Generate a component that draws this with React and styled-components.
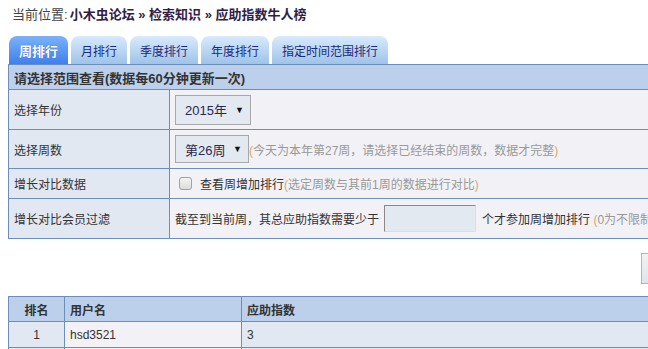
import React from "react";
import styled, { createGlobalStyle, css } from "styled-components";

const Global = createGlobalStyle`
  html, body { margin: 0; padding: 0; overflow: hidden; background: #fff; }
  body { font-family: "Liberation Sans", "Noto Sans CJK SC", sans-serif; font-size: 12px; color: #333; }
`;

const Page = styled.div`
  width: 1000px;
  padding: 0 0 0 8px;
`;

const Crumb = styled.div`
  height: 26px;
  display: flex;
  align-items: center;
  padding-left: 4px;
  font-size: 13px;
  color: #444;
`;

const CrumbStrong = styled.b`
  color: #2f1d45;
  margin-left: 2px;
`;

const Tabs = styled.div`
  display: flex;
  gap: 3px;
  margin-top: 10px;
  padding-left: 1px;
  height: 28px;
  align-items: stretch;
`;

const Tab = styled.div`
  padding: 0 10px;
  display: flex;
  align-items: center;
  justify-content: center;
  border-radius: 8px 8px 0 0;
  font-size: 12px;
  color: #1b2a7a;
  background: linear-gradient(#d8eafd, #9fc3e8);
  ${(p) =>
    p.$active &&
    css`
      background: linear-gradient(#7bb2fa, #3f80ea);
      color: #fff;
      font-weight: bold;
      font-size: 13px;
      text-shadow: 0 0 1px #3060c0;
    `}
`;

const Table = styled.table`
  border-collapse: collapse;
  width: 992px;
  border: 1px solid #6b8fba;
  td, th { border: 1px solid #6b8fba; padding: 0 5px; }
`;

const HeadCell = styled.th`
  background: #bcd0ec;
  text-align: ${(p) => p.$align || "left"};
  font-weight: bold;
  font-size: ${(p) => p.$size || 12}px;
  color: #333;
  height: 24px;
  width: ${(p) => (p.$w ? p.$w + "px" : "auto")};
`;

const Label = styled.td`
  background: #e2e8f1;
  width: 150px;
  height: ${(p) => p.$h}px;
  color: #333;
`;

const Value = styled.td`
  background: #f1f1f6;
  height: ${(p) => p.$h}px;
`;

const Inline = styled.div`
  display: flex;
  align-items: center;
  white-space: nowrap;
`;

const FakeSelect = styled.div`
  box-sizing: border-box;
  width: ${(p) => p.$w}px;
  height: ${(p) => p.$h}px;
  border: 1px solid #a8a8a8;
  background: #e3e9f1;
  display: flex;
  align-items: center;
  justify-content: space-between;
  padding: 0 6px 0 9px;
  font-size: 13px;
  color: #2a2850;
`;

const Arrow = styled.span`
  font-size: 9px;
  color: #111;
`;

const Hint = styled.span`
  color: #999;
  font-size: 12px;
`;

const Paren = styled.span`
  color: #d9a866;
`;

const Check = styled.span`
  box-sizing: border-box;
  width: 13px;
  height: 13px;
  border: 1px solid #a0a0a0;
  border-radius: 3px;
  background: linear-gradient(#f4f4f4, #dcdcdc);
  margin: 0 8px 0 4px;
`;

const Text = styled.span`
  color: #333;
  font-size: 12px;
`;

const NumInput = styled.input`
  box-sizing: border-box;
  width: 92px;
  height: 27px;
  margin: 0 6px 0 5px;
  background: #e3e9f1;
  border: 1px solid #ddd;
  border-top-color: #888;
  border-left-color: #888;
  padding: 0;
`;

const ButtonRow = styled.div`
  padding: 14px 0 12px 633px;
`;

const Btn = styled.button`
  box-sizing: border-box;
  width: 70px;
  height: 31px;
  border: 1px solid #b5b5b5;
  background: linear-gradient(#f2f2f2, #e0e4ec);
  font-family: inherit;
  font-size: 12px;
`;

const DataCell = styled.td`
  background: ${(p) => (p.$alt ? "#f1f1f6" : "#e2e8f1")};
  text-align: ${(p) => p.$align || "left"};
  height: 25px;
  font-size: 12px;
  color: #333;
`;

export default function App() {
  return (
    <>
      <Global />
      <Page>
        <Crumb>
          当前位置:
          <CrumbStrong>小木虫论坛 » 检索知识 » 应助指数牛人榜</CrumbStrong>
        </Crumb>
        <Tabs>
          <Tab $active>周排行</Tab>
          <Tab>月排行</Tab>
          <Tab>季度排行</Tab>
          <Tab>年度排行</Tab>
          <Tab>指定时间范围排行</Tab>
        </Tabs>
        <Table>
          <tbody>
            <tr>
              <HeadCell colSpan={2} $size={13}>请选择范围查看(数据每60分钟更新一次)</HeadCell>
            </tr>
            <tr>
              <Label $h={39}>选择年份</Label>
              <Value $h={39}>
                <FakeSelect $w={76} $h={30}>
                  2015年<Arrow>▼</Arrow>
                </FakeSelect>
              </Value>
            </tr>
            <tr>
              <Label $h={38}>选择周数</Label>
              <Value $h={38}>
                <Inline>
                  <FakeSelect $w={74} $h={28}>
                    第26周<Arrow>▼</Arrow>
                  </FakeSelect>
                  <Hint>
                    <Paren>(</Paren>今天为本年第27周，请选择已经结束的周数，数据才完整<Paren>)</Paren>
                  </Hint>
                </Inline>
              </Value>
            </tr>
            <tr>
              <Label $h={29}>增长对比数据</Label>
              <Value $h={29}>
                <Inline>
                  <Check />
                  <Text>查看周增加排行</Text>
                  <Hint>
                    <Paren>(</Paren>选定周数与其前1周的数据进行对比<Paren>)</Paren>
                  </Hint>
                </Inline>
              </Value>
            </tr>
            <tr>
              <Label $h={39}>增长对比会员过滤</Label>
              <Value $h={39}>
                <Inline>
                  <Text>截至到当前周，其总应助指数需要少于</Text>
                  <NumInput type="text" />
                  <Text>个才参加周增加排行</Text>
                  <Hint>&nbsp;<Paren>(</Paren>0为不限制，只对周增加排行有效<Paren>)</Paren></Hint>
                </Inline>
              </Value>
            </tr>
          </tbody>
        </Table>
        <ButtonRow>
          <Btn>查询</Btn>
        </ButtonRow>
        <Table>
          <tbody>
            <tr>
              <HeadCell $align="center" $w={45}>排名</HeadCell>
              <HeadCell $w={166}>用户名</HeadCell>
              <HeadCell>应助指数</HeadCell>
            </tr>
            <tr>
              <DataCell $align="center">1</DataCell>
              <DataCell $alt>hsd3521</DataCell>
              <DataCell>3</DataCell>
            </tr>
            <tr>
              <DataCell $align="center">2</DataCell>
              <DataCell $alt>user</DataCell>
              <DataCell>2</DataCell>
            </tr>
          </tbody>
        </Table>
      </Page>
    </>
  );
}
